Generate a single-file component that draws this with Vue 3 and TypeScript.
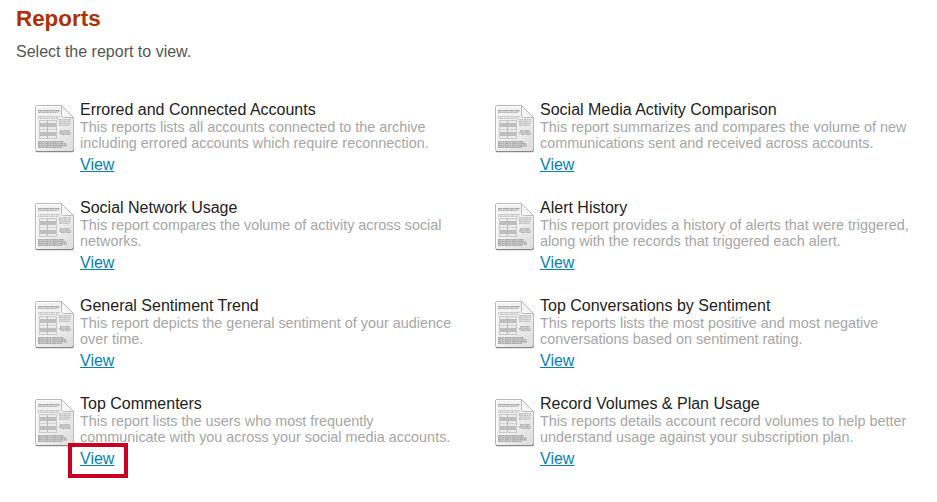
<script setup lang="ts">
interface Report {
  title: string
  lines: string[]
  highlighted?: boolean
}

const reports: Report[] = [
  { title: 'Errored and Connected Accounts', lines: ['This reports lists all accounts connected to the archive', 'including errored accounts which require reconnection.'] },
  { title: 'Social Media Activity Comparison', lines: ['This report summarizes and compares the volume of new', 'communications sent and received across accounts.'] },
  { title: 'Social Network Usage', lines: ['This report compares the volume of activity across social', 'networks.'] },
  { title: 'Alert History', lines: ['This report provides a history of alerts that were triggered,', 'along with the records that triggered each alert.'] },
  { title: 'General Sentiment Trend', lines: ['This report depicts the general sentiment of your audience', 'over time.'] },
  { title: 'Top Conversations by Sentiment', lines: ['This reports lists the most positive and most negative', 'conversations based on sentiment rating.'] },
  { title: 'Top Commenters', lines: ['This report lists the users who most frequently', 'communicate with you across your social media accounts.'], highlighted: true },
  { title: 'Record Volumes & Plan Usage', lines: ['This reports details account record volumes to help better', 'understand usage against your subscription plan.'] },
]
</script>

<template>
  <main class="page">
    <svg class="defs" width="0" height="0" aria-hidden="true">
      <defs>
        <linearGradient id="paper" x1="0" y1="0" x2="1" y2="1">
          <stop offset="0" stop-color="#f4f4f4" />
          <stop offset="0.5" stop-color="#f0f0f0" />
          <stop offset="1" stop-color="#dcdcdc" />
        </linearGradient>
        <linearGradient id="fold" x1="0" y1="1" x2="1" y2="0">
          <stop offset="0" stop-color="#ffffff" />
          <stop offset="1" stop-color="#e2e2e2" />
        </linearGradient>
        <symbol id="document" viewBox="0 0 40 48">
          <path d="M2 1.5H27L39 13.5V45.5Q39 47.5 37 47.5H2.5Q.5 47.5 .5 45.5V3Q.5 1.5 2 1.5Z" fill="#c5c5c5" />
          <path d="M2 .5H26.5L38.5 12.5V44.5Q38.5 46.5 36.5 46.5H2.5Q.5 46.5 .5 44.5V2Q.5 .5 2 .5Z" fill="url(#paper)" stroke="#b9b9b9" />
          <path d="M1.5 45V1.5H26" fill="none" stroke="#fff" />
          <path d="M1 46.5H37Q38.5 46.5 38.5 44.5" fill="none" stroke="#888" />
          <g fill="none" stroke-width="1.2">
            <path d="M3 5.5H24.5" stroke="#aaa" stroke-dasharray="4.4 .5 6.7 .4" />
            <path d="M3 6.5H25" stroke="#c6c6c6" stroke-dasharray="1.3 .5" />
            <path d="M3 7.5H23" stroke="#b8b8b8" stroke-dasharray="3.3 .5" />
            <path d="M3 11.5H25M3 13.5H23" stroke="#c5c5c5" stroke-dasharray="1.5 .6 2.7 .5" />
            <path d="M3 12.5H24" stroke="#d7d7d7" stroke-dasharray="1.2 .8" />
            <path d="M23.5 14.5H36M23.5 16.5H36M24 18.5H36M24 20.5H35" stroke="#c0c0c0" stroke-dasharray="2.7 .5 1.4 .6" />
            <path d="M24 15.5H36M24 17.5H35M24 19.5H35" stroke="#dadada" />
            <path d="M25 25.5H35M24 27.5H36M26 29.5H36" stroke="#b4b4b4" stroke-dasharray="3.3 .5 1.5 .5" />
            <path d="M25 26.5H35M24 28.5H36" stroke="#cacaca" />
            <path d="M3 36.5H29M3 38.5H31M3 40.5H32M3 42.5H27" stroke="#aaa" stroke-dasharray="3.7 .5 2.3 .6" />
            <path d="M3 37.5H29M3 39.5H32M3 41.5H32" stroke="#bdbdbd" stroke-dasharray="2.3 .5" />
          </g>
          <rect x="4.5" y="15.5" width="17" height="18" fill="#ebebeb" stroke="#cacaca" />
          <path d="M5 18H21V22H5ZM5 27H21V31H5Z" fill="#bebebe" />
          <path d="M5 24.5H21" stroke="#d5d5d5" />
          <path d="M12.5 16V33" stroke="#bababa" />
          <path d="M26.5 .5V10.5Q26.5 12.5 28.5 12.5H38.5Z" fill="url(#fold)" stroke="#bbb" />
        </symbol>
      </defs>
    </svg>
    <h1>Reports</h1>
    <p class="intro">Select the report to view.</p>
    <section class="reports">
      <article v-for="report in reports" :key="report.title" class="report">
        <svg class="icon" aria-hidden="true"><use href="#document" /></svg>
        <div class="content">
          <h2>{{ report.title }}</h2>
          <p class="description"><span v-for="line in report.lines" :key="line">{{ line }}</span></p>
          <a href="#" class="view" :class="{ highlighted: report.highlighted }">View</a>
        </div>
      </article>
    </section>
  </main>
</template>

<style>
body { background: #fff; }
</style>

<style scoped>
.page { box-sizing: border-box; width: 937px; height: 502px; padding: 6px 16px 0; overflow: hidden; font-family: "Liberation Sans", Arial, sans-serif; }
.defs { position: absolute; }
h1 { margin: 0; font-size: 22.4px; line-height: 26px; color: #b03002; }
.intro { margin: 10px 0 0; font-size: 16px; line-height: 20px; color: #555; }
.reports { display: grid; grid-template-columns: 460px 440px; grid-auto-rows: 98px; padding: 38px 0 0 19px; }
.report { display: flex; gap: 5px; }
.icon { width: 40px; height: 48px; flex: none; margin-top: 5px; }
.content { white-space: nowrap; }
h2 { margin: 0; font-size: 16px; font-weight: 400; line-height: 19px; color: #222; }
.description { margin: 0; font-size: 14.4px; line-height: 16px; color: #a6a6a6; }
.description span { display: block; }
.view { position: relative; display: block; width: max-content; margin-top: 4px; font-size: 16px; line-height: 20px; color: #087fb4; text-decoration: underline; }
.highlighted::after { content: ""; position: absolute; box-sizing: border-box; width: 60px; height: 35px; top: -6px; left: -12px; border: 4px solid #c90022; }
</style>
